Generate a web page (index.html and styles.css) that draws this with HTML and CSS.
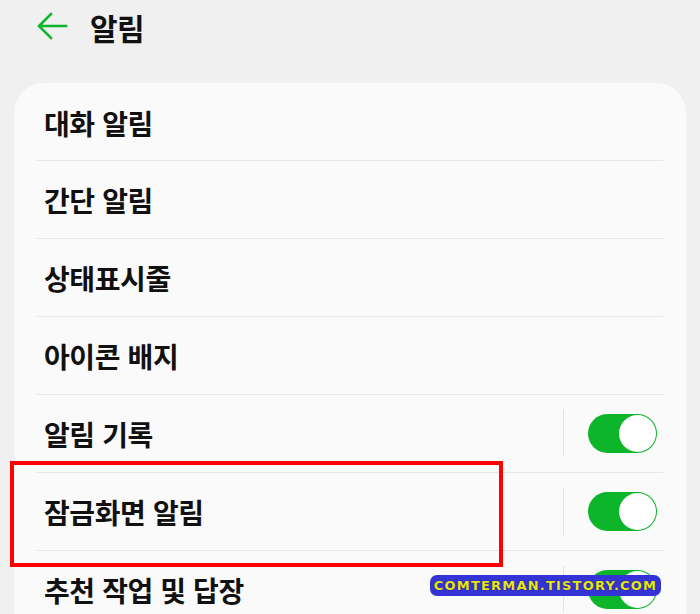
FILE: index.html
```html
<!DOCTYPE html>
<html lang="ko">
<head>
  <meta charset="UTF-8" />
  <meta name="viewport" content="width=device-width, initial-scale=1.0"/>
  <title>알림</title>
  <link rel="stylesheet" href="styles.css">
</head>
<body>

  <!-- Top bar -->
  <header class="top-bar">
    <button class="back-btn" aria-label="뒤로">
      <svg width="32" height="32" viewBox="0 0 32 32">
        <path d="M30 15H4M15 3L3 15l12 12" fill="none" stroke="#0db52b" stroke-width="2.6" stroke-linecap="square"/>
      </svg>
    </button>
    <h1>알림</h1>
  </header>

  <div class="card">
    <div class="row"><span class="label">대화 알림</span></div>
    <div class="row"><span class="label">간단 알림</span></div>
    <div class="row"><span class="label">상태표시줄</span></div>
    <div class="row"><span class="label">아이콘 배지</span></div>
    <div class="row">
      <span class="label">알림 기록</span>
      <span class="divider"></span>
      <span class="switch on"></span>
    </div>
    <div class="row highlighted">
      <span class="label">잠금화면 알림</span>
      <span class="divider"></span>
      <span class="switch on"></span>
    </div>
    <div class="row">
      <span class="label">추천 작업 및 답장</span>
      <span class="divider"></span>
      <span class="switch on"></span>
    </div>
  </div>

  <!-- red highlight box -->
  <div class="mark-box"></div>

  <div class="watermark">COMTERMAN.TISTORY.COM</div>

</body>
</html>
```

FILE: styles.css
```css
:root {
  --bg: #f0f0f0;
  --card-bg: #fafafa;
  --line: #e7e7e7;
  --green: #0db52b;
  --text: #111;
}

* {
  box-sizing: border-box;
}

body {
  margin: 0;
  padding: 0;
  background: var(--bg);
  color: var(--text);
  font-family: 'Noto Sans CJK KR', 'Noto Sans', sans-serif;
  height: 614px;
  overflow: hidden;
  position: relative;
}

.top-bar {
  height: 54px;
  display: flex;
  align-items: center;
  padding-left: 36px;
  gap: 22px;
}

.back-btn {
  background: none;
  border: none;
  padding: 0;
  width: 32px;
  height: 32px;
  display: flex;
}

.top-bar h1 {
  margin: 0;
  font-size: 30px;
  font-weight: 700;
  letter-spacing: -0.5px;
}

.card {
  margin: 29px 14px 0;
  background: var(--card-bg);
  border-radius: 30px 30px 0 0;
  padding: 0 23px;
  display: flex;
  flex-direction: column;
}

.row {
  height: 78px;
  display: flex;
  align-items: center;
  padding: 0 6px 0 7px;
  border-bottom: 1px solid var(--line);
}

.row:first-child {
  height: 78px;
  padding-top: 2px;
}

.label {
  flex: 1;
  font-size: 28px;
  font-weight: 600;
  letter-spacing: -0.4px;
}

.divider {
  width: 1px;
  height: 47px;
  background: #e2e2e2;
  margin-right: 24px;
}

.switch {
  width: 69px;
  height: 39px;
  border-radius: 20px;
  background: var(--green);
  position: relative;
}

.switch::after {
  content: '';
  position: absolute;
  top: 1px;
  right: 1px;
  width: 37px;
  height: 37px;
  border-radius: 50%;
  background: #fff;
}

.mark-box {
  position: absolute;
  left: 10px;
  top: 461px;
  width: 493px;
  height: 106px;
  border: 4px solid #ff0000;
}

.watermark {
  position: absolute;
  left: 430px;
  top: 575px;
  width: 231px;
  height: 21px;
  border-radius: 7px;
  background: #3434d6;
  color: #e6e61a;
  font-family: 'DejaVu Sans', sans-serif;
  font-weight: 700;
  font-size: 13px;
  letter-spacing: 1.2px;
  line-height: 21px;
  text-align: center;
  text-shadow: 0 0 1px #111;
}
```
